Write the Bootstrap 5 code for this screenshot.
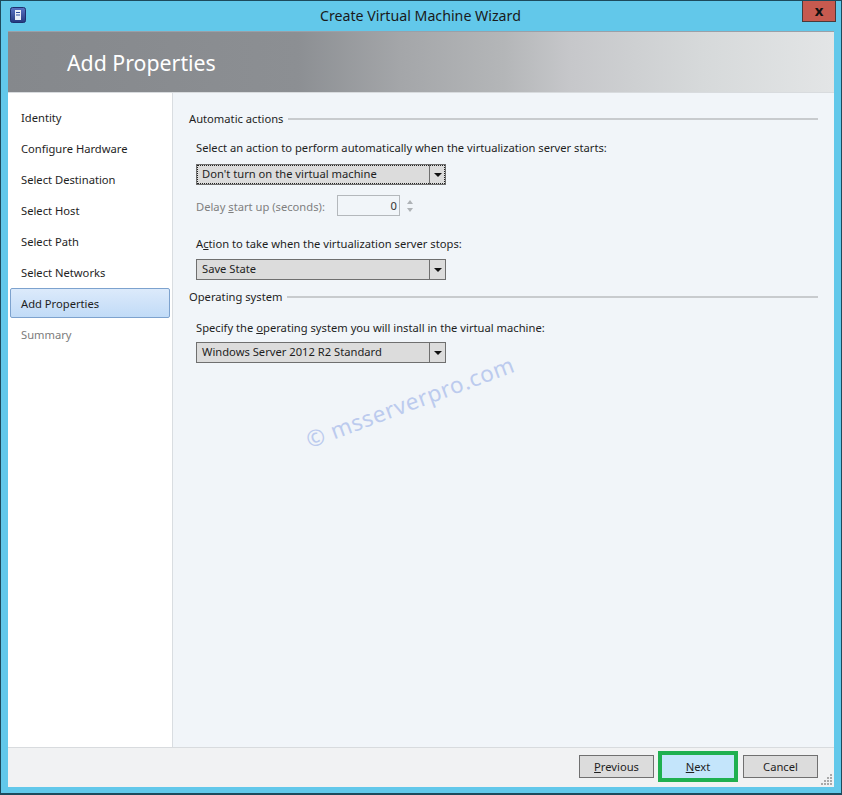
<!DOCTYPE html>
<html lang="en"><head><meta charset="utf-8"><title>Create Virtual Machine Wizard</title>
<link href="https://cdn.jsdelivr.net/npm/bootstrap@5.3.0/dist/css/bootstrap.min.css" rel="stylesheet">
<style>
html,body{margin:0;height:795px;overflow:hidden}
body{font-family:"Noto Sans","Open Sans",sans-serif;font-size:11.2px;color:#1e1e1e;background:#62c8ea}
.win{width:842px;height:795px;border:1px solid #1d4a5c;border-bottom-width:2px;background:#62c8ea}
.tbar{height:30px;padding-left:9px;padding-right:5px}
.ticon{width:16px;height:16px;margin-top:6px;flex:none}
.ttitle{font-size:14.2px;color:#1a1a1a;padding-top:5px;padding-left:294px;line-height:20px}
.xbtn{width:34px;height:21px;background:#c75a4f;border:1px solid #4a3a3a;border-top:0;font-weight:700;font-size:15px;line-height:18px;color:#111}
.client{margin:0 7px;height:756px;background:#f1f5f9;position:relative}
.hdr{height:62px;background:linear-gradient(90deg,#85888c 0,#8c8f93 35%,#a4a6a9 47.5%,#b4b6b8 60%,#c6c7ca 68%,#d6d9da 84%,#e3e5e6 100%);border-top:1px solid #9aa0a8;border-bottom:1px solid #d8dbde;padding-left:59px;font-size:21.3px;color:#fff;line-height:61px}
.mid{height:654px}
.side{width:165px;background:#fff;border-right:1px solid #d9dde1;padding:9px 2px 0}
.step{height:31px;line-height:30px;padding-left:10px;width:160px;border:1px solid transparent;border-radius:2px}
.step.on{height:30px;line-height:29px;margin-bottom:1px;background:linear-gradient(#dceafb,#c1dbf7);border-color:#7da2ce}
.step.off{color:#7c7c7c}
.pane{padding:16px 16px 0 16px}
.gh{height:20px;line-height:20px}
.gh::after{content:"";flex:1;height:2px;background:#c8cbce;margin-left:5px;margin-top:-1px}
.lbl{height:20px;line-height:20px;padding-left:7px}
.lbl.dim{color:#7f7f7f;width:148px;flex:none;padding-top:1px}
.combo{width:250px;height:21px;margin-left:7px;background:#dcdcdc;border:1px solid #6f6f6f;line-height:18px;padding-left:5px}
.combo .cv{flex:1}
.combo .car{width:16px;border-left:1px solid #6f6f6f}
.combo .car i{border:4px solid transparent;border-top:4px solid #111;border-bottom:0;display:block}
.combo.foc{outline:1px dotted #222;outline-offset:-2px}
.num{width:63px;height:21px;border:1px solid #b4b8bc;background:#f1f5f9;color:#333;text-align:right;line-height:19px;padding-right:2px;flex:none}
.spin{width:13px;margin-left:3px;gap:4px}
.spin i{display:block;border:3.5px solid transparent;border-bottom:4px solid #aeb2b6;border-top:0}
.spin i+i{border-top:4px solid #aeb2b6;border-bottom:0}
.m9{margin-top:9px}.m6{margin-top:6px}.m10{margin-top:10px}.m18{margin-top:18px}.m5{margin-top:5px}.m7{margin-top:7px}.m11{margin-top:11px}.m4{margin-top:4px}
.foot{height:40px;background:#f1f2f3;border-top:1px solid #d8dbde;padding:7px 16px 0 0;position:relative}
.wbtn{width:75px;height:23px;background:#dcdcdc;border:1px solid #707070;line-height:21px;text-align:center;color:#1e1e1e;padding:0;font-size:11.2px;border-radius:0}
.wbtn.next{background:#c4e5fb}
.ring{border:4px solid #1fb050;height:31px;width:80px;margin:-4px 5px 0 4px}
.ring .wbtn{border:0;width:72px;height:23px}
.grip{position:absolute;right:1px;bottom:1px;width:12px;height:12px}
.wm{position:absolute;left:307px;top:426px;font-size:22.5px;color:#bccbee;transform:rotate(-20.5deg);transform-origin:left center;letter-spacing:.6px;white-space:nowrap;line-height:30px}
</style></head><body>
<div class="win">
 <div class="tbar d-flex">
  <svg class="ticon" viewBox="0 0 16 16"><defs><linearGradient id="ig" x1="0" y1="0" x2="0" y2="1"><stop offset="0" stop-color="#5a74c4"/><stop offset="1" stop-color="#25397f"/></linearGradient></defs><rect x=".5" y=".5" width="15" height="15" rx="2" fill="url(#ig)" stroke="#1d2f6e"/><rect x="5" y="3" width="6" height="10" fill="#e9eef8"/><path d="M6 5.5h4M6 8h4" stroke="#2f4d9e"/></svg>
  <div class="ttitle flex-grow-1">Create Virtual Machine Wizard</div>
  <div class="xbtn text-center">x</div>
 </div>
 <div class="client">
  <div class="hdr">Add Properties</div>
  <div class="mid d-flex">
   <div class="side">
    <div class="step">Identity</div>
    <div class="step">Configure Hardware</div>
    <div class="step">Select Destination</div>
    <div class="step">Select Host</div>
    <div class="step">Select Path</div>
    <div class="step">Select Networks</div>
    <div class="step on">Add Properties</div>
    <div class="step off">Summary</div>
   </div>
   <div class="pane flex-grow-1">
    <div class="gh d-flex align-items-center">Automatic actions</div>
    <div class="lbl m9">Select an action to perform automatically when the virtualization server starts:</div>
    <div class="combo foc d-flex m6"><span class="cv">Don't turn on the virtual machine</span><span class="car d-flex align-items-center justify-content-center"><i></i></span></div>
    <div class="d-flex align-items-center m10">
     <div class="lbl dim">Delay <u>s</u>tart up (seconds):</div>
     <div class="num">0</div>
     <div class="spin d-flex flex-column align-items-center"><i></i><i></i></div>
    </div>
    <div class="lbl m18">A<u>c</u>tion to take when the virtualization server stops:</div>
    <div class="combo d-flex m5"><span class="cv">Save State</span><span class="car d-flex align-items-center justify-content-center"><i></i></span></div>
    <div class="gh d-flex align-items-center m7">Operating system</div>
    <div class="lbl m11">Specify the <u>o</u>perating system you will install in the virtual machine:</div>
    <div class="combo d-flex m4"><span class="cv">Windows Server 2012 R2 Standard</span><span class="car d-flex align-items-center justify-content-center"><i></i></span></div>
   </div>
  </div>
  <div class="foot d-flex justify-content-end">
   <button class="btn wbtn"><u>P</u>revious</button>
   <div class="ring"><button class="btn wbtn next"><u>N</u>ext</button></div>
   <button class="btn wbtn">Cancel</button>
   <svg class="grip" viewBox="0 0 12 12" fill="#a9a9a9"><rect x="9" y="0" width="2" height="2"/><rect x="6" y="3" width="2" height="2"/><rect x="9" y="3" width="2" height="2"/><rect x="3" y="6" width="2" height="2"/><rect x="6" y="6" width="2" height="2"/><rect x="9" y="6" width="2" height="2"/><rect x="0" y="9" width="2" height="2"/><rect x="3" y="9" width="2" height="2"/><rect x="6" y="9" width="2" height="2"/><rect x="9" y="9" width="2" height="2"/></svg>
  </div>
 </div>
</div>
<div class="wm">© msserverpro.com</div>
</body></html>
